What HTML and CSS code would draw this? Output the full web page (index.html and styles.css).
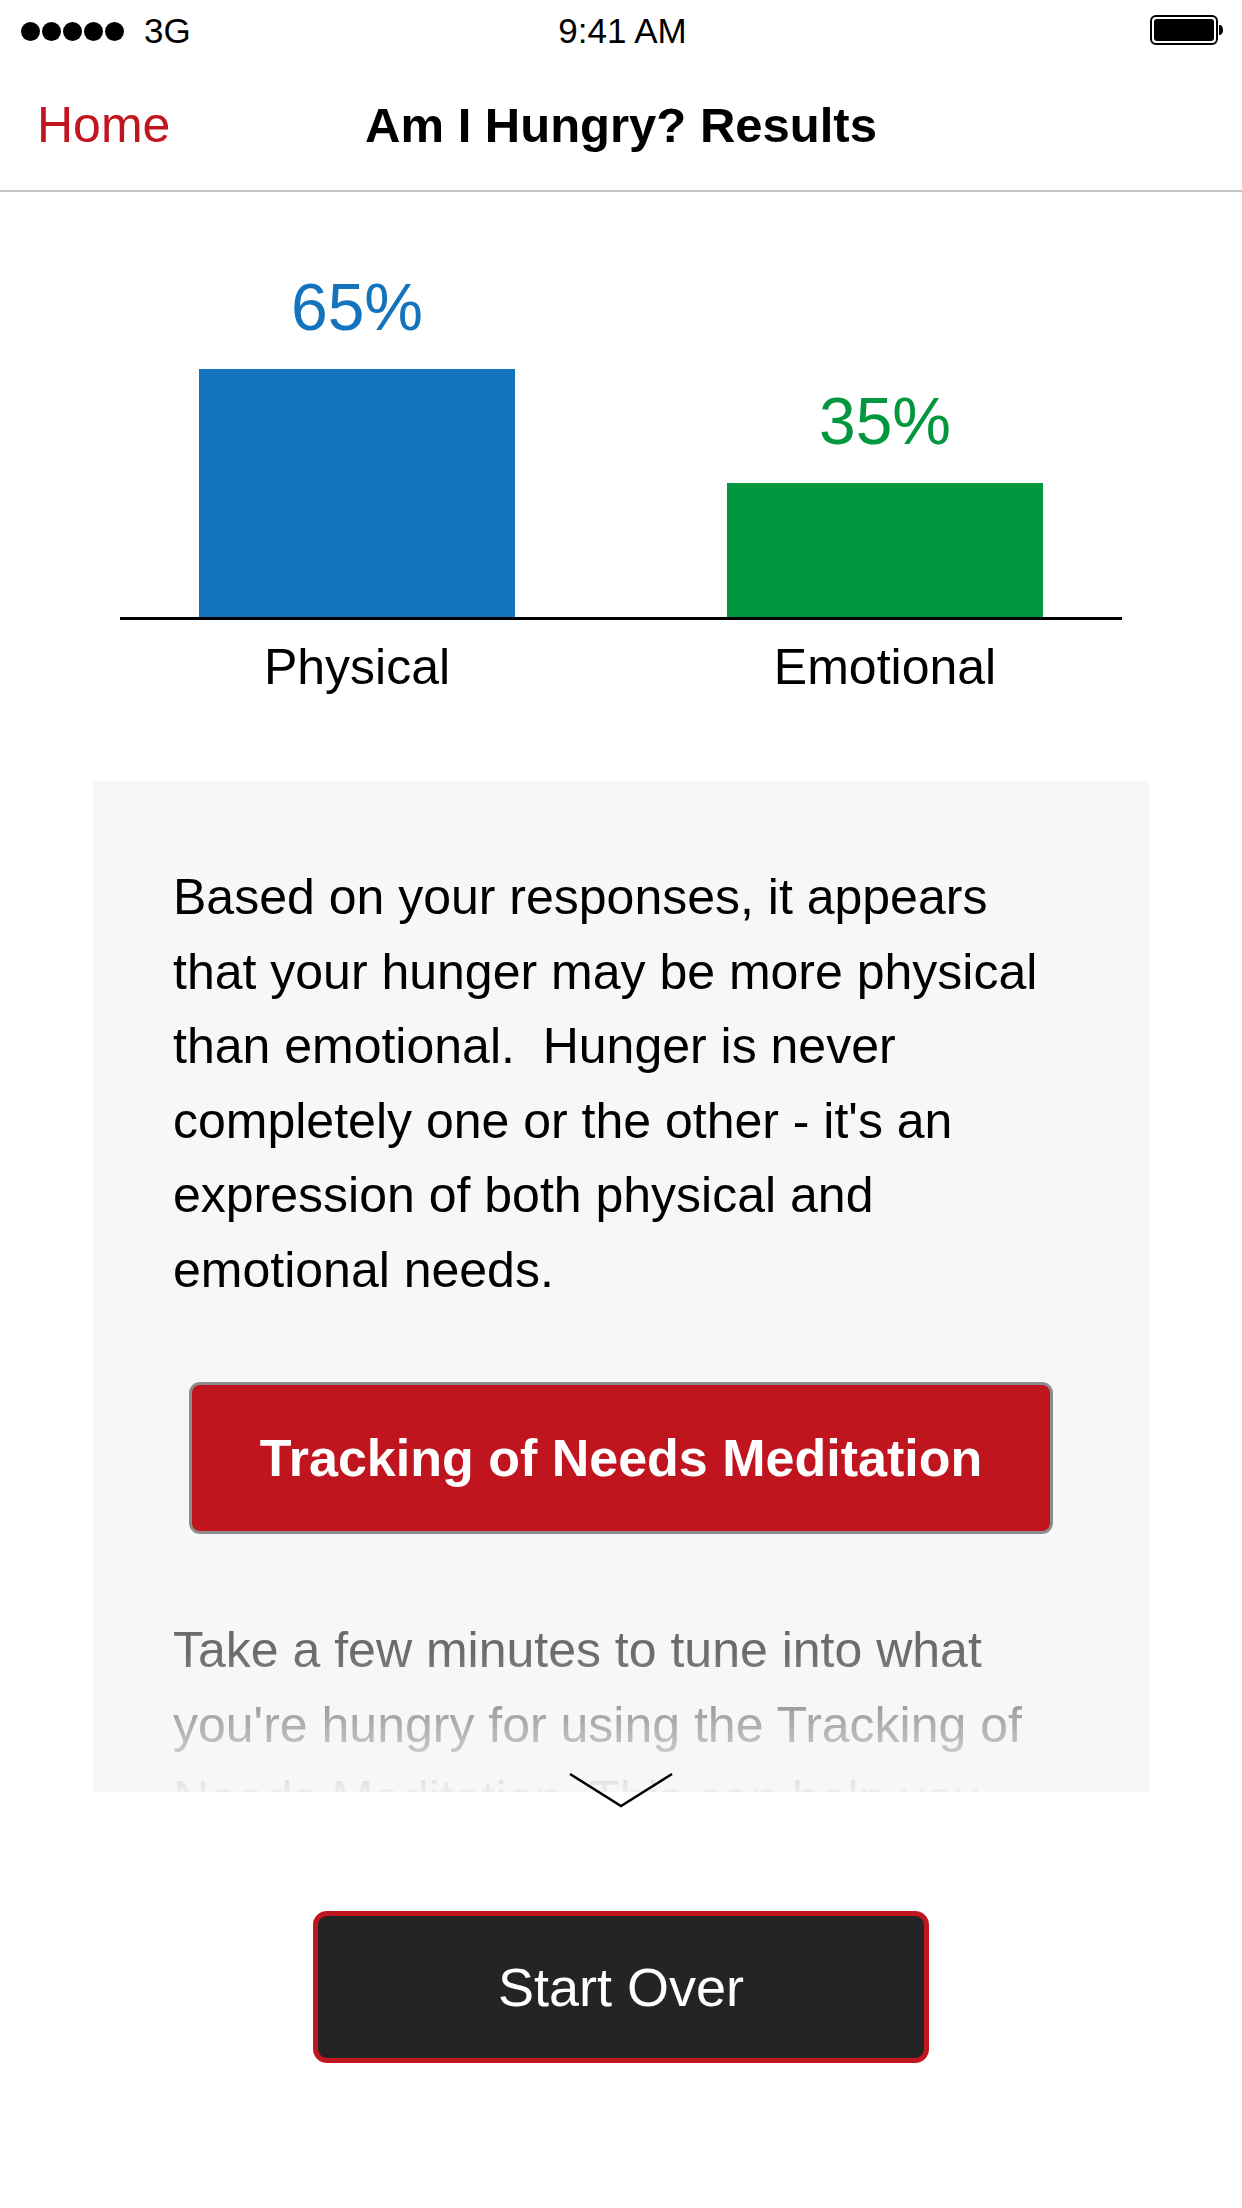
FILE: index.html
```html
<!DOCTYPE html>
<html lang="en">
<head>
<meta charset="utf-8">
<title>Am I Hungry? Results</title>
<link rel="stylesheet" href="styles.css">
</head>
<body>
<div class="screen">
  <header class="status">
    <div class="status-left">
      <span class="dots"><i></i><i></i><i></i><i></i><i></i></span>
      <span class="carrier">3G</span>
    </div>
    <div class="status-time">9:41 AM</div>
    <div class="status-right">
      <svg class="battery" width="74" height="30" viewBox="0 0 74 30">
        <rect x="1" y="1" width="66" height="28" rx="5" fill="none" stroke="#000" stroke-width="2"/>
        <rect x="4" y="4" width="60" height="22" rx="3" fill="#000"/>
        <path d="M69 10 h1 a3 5 0 0 1 0 10 h-1 z" fill="#000"/>
      </svg>
    </div>
  </header>

  <nav class="navbar">
    <a class="nav-back">Home</a>
    <h1 class="nav-title">Am I Hungry? Results</h1>
    <span class="nav-spacer"></span>
  </nav>

  <section class="chart">
    <div class="bars">
      <div class="bar-col">
        <div class="pct pct-physical">65%</div>
        <div class="bar bar-physical" style="height:248px"></div>
      </div>
      <div class="bar-col">
        <div class="pct pct-emotional">35%</div>
        <div class="bar bar-emotional" style="height:134px"></div>
      </div>
    </div>
    <div class="bar-labels">
      <div class="bar-label">Physical</div>
      <div class="bar-label">Emotional</div>
    </div>
  </section>

  <div class="panel-wrap">
    <section class="panel">
      <p class="result-text">Based on your responses, it appears that your hunger may be more physical than emotional.&nbsp; Hunger is never completely one or the other - it's an expression of both physical and emotional needs.</p>
      <button class="btn-meditation">Tracking of Needs Meditation</button>
      <p class="more-text">Take a few minutes to tune into what you're hungry for using the Tracking of Needs Meditation. This can help you discover what you really need.</p>
      <div class="fade"></div>
    </section>
    <svg class="chevron" width="106" height="36" viewBox="0 0 106 36">
      <polyline points="2,2 53,34 104,2" fill="none" stroke="#000" stroke-width="2.5"/>
    </svg>
  </div>

  <div class="footer">
    <button class="btn-start">Start Over</button>
  </div>
</div>
</body>
</html>
```

FILE: styles.css
```css
* { box-sizing: border-box; }

html, body {
  margin: 0;
  padding: 0;
  background: #fff;
}

body {
  font-family: "Liberation Sans", Arial, sans-serif;
  color: #000;
}

.screen {
  width: 1242px;
  min-height: 2208px;
  background: #fff;
}

/* Status bar */
.status {
  height: 60px;
  display: grid;
  grid-template-columns: 1fr auto 1fr;
  align-items: center;
  padding: 2px 18px 0 21px;
  font-size: 35px;
}

.status-left {
  display: flex;
  align-items: center;
}

.dots {
  display: flex;
  gap: 2px;
}

.dots i {
  width: 19px;
  height: 19px;
  border-radius: 50%;
  background: #000;
  display: block;
}

.carrier {
  margin-left: 20px;
}

.status-time {
  text-align: center;
}

.status-right {
  display: flex;
  justify-content: flex-end;
  align-items: center;
}

.battery {
  display: block;
  margin-top: -3px;
}

/* Navigation bar */
.navbar {
  height: 132px;
  display: grid;
  grid-template-columns: 1fr auto 1fr;
  align-items: center;
  padding: 0 37px;
  border-bottom: 2px solid #c4c4c4;
}

.nav-back {
  color: #c1151f;
  font-size: 50px;
}

.nav-title {
  margin: 0;
  font-size: 49px;
  font-weight: bold;
  text-align: center;
}

/* Chart */
.chart {
  padding-top: 77px;
}

.bars {
  margin: 0 120px;
  padding: 0 79px;
  display: flex;
  justify-content: space-between;
  align-items: flex-end;
  border-bottom: 3px solid #000;
}

.bar-col {
  width: 316px;
  display: flex;
  flex-direction: column;
  align-items: center;
}

.pct {
  font-size: 66px;
  line-height: 76px;
  margin-bottom: 24px;
}

.pct-physical { color: #1473bd; }
.pct-emotional { color: #02963f; }

.bar {
  width: 316px;
}

.bar-physical { background: #1473bd; }
.bar-emotional { background: #02963f; }

.bar-labels {
  margin: 18px 120px 0;
  padding: 0 79px;
  display: flex;
  justify-content: space-between;
}

.bar-label {
  width: 316px;
  text-align: center;
  font-size: 50px;
  line-height: 58px;
}

/* Result panel */
.panel-wrap {
  position: relative;
  margin: 85px 93px 0;
}

.panel {
  position: relative;
  height: 1011px;
  overflow: hidden;
  background: #f7f7f7;
  padding: 79px 80px 0;
}

.result-text,
.more-text {
  margin: 0;
  font-size: 50px;
  line-height: 74.5px;
}

.result-text { color: #000; }

.more-text {
  color: #6b6b6b;
  margin-top: 79px;
}

.btn-meditation {
  display: block;
  width: 864px;
  height: 152px;
  margin: 75px auto 0;
  background: #c0141e;
  border: 3px solid #8d8d8d;
  border-radius: 11px;
  color: #fff;
  font-family: "Liberation Sans", Arial, sans-serif;
  font-size: 52px;
  font-weight: bold;
  padding: 0;
}

.fade {
  position: absolute;
  left: 0;
  right: 0;
  bottom: 0;
  height: 140px;
  background: linear-gradient(to bottom, rgba(247, 247, 247, 0), rgba(247, 247, 247, 0.93));
}

.chevron {
  position: absolute;
  left: 475px;
  bottom: -16px;
  display: block;
}

/* Footer */
.footer {
  padding-top: 119px;
  display: flex;
  justify-content: center;
}

.btn-start {
  width: 616px;
  height: 152px;
  background: #242424;
  border: 5px solid #c1151f;
  border-radius: 14px;
  color: #fff;
  font-family: "Liberation Sans", Arial, sans-serif;
  font-size: 54px;
  padding: 0;
}
```
